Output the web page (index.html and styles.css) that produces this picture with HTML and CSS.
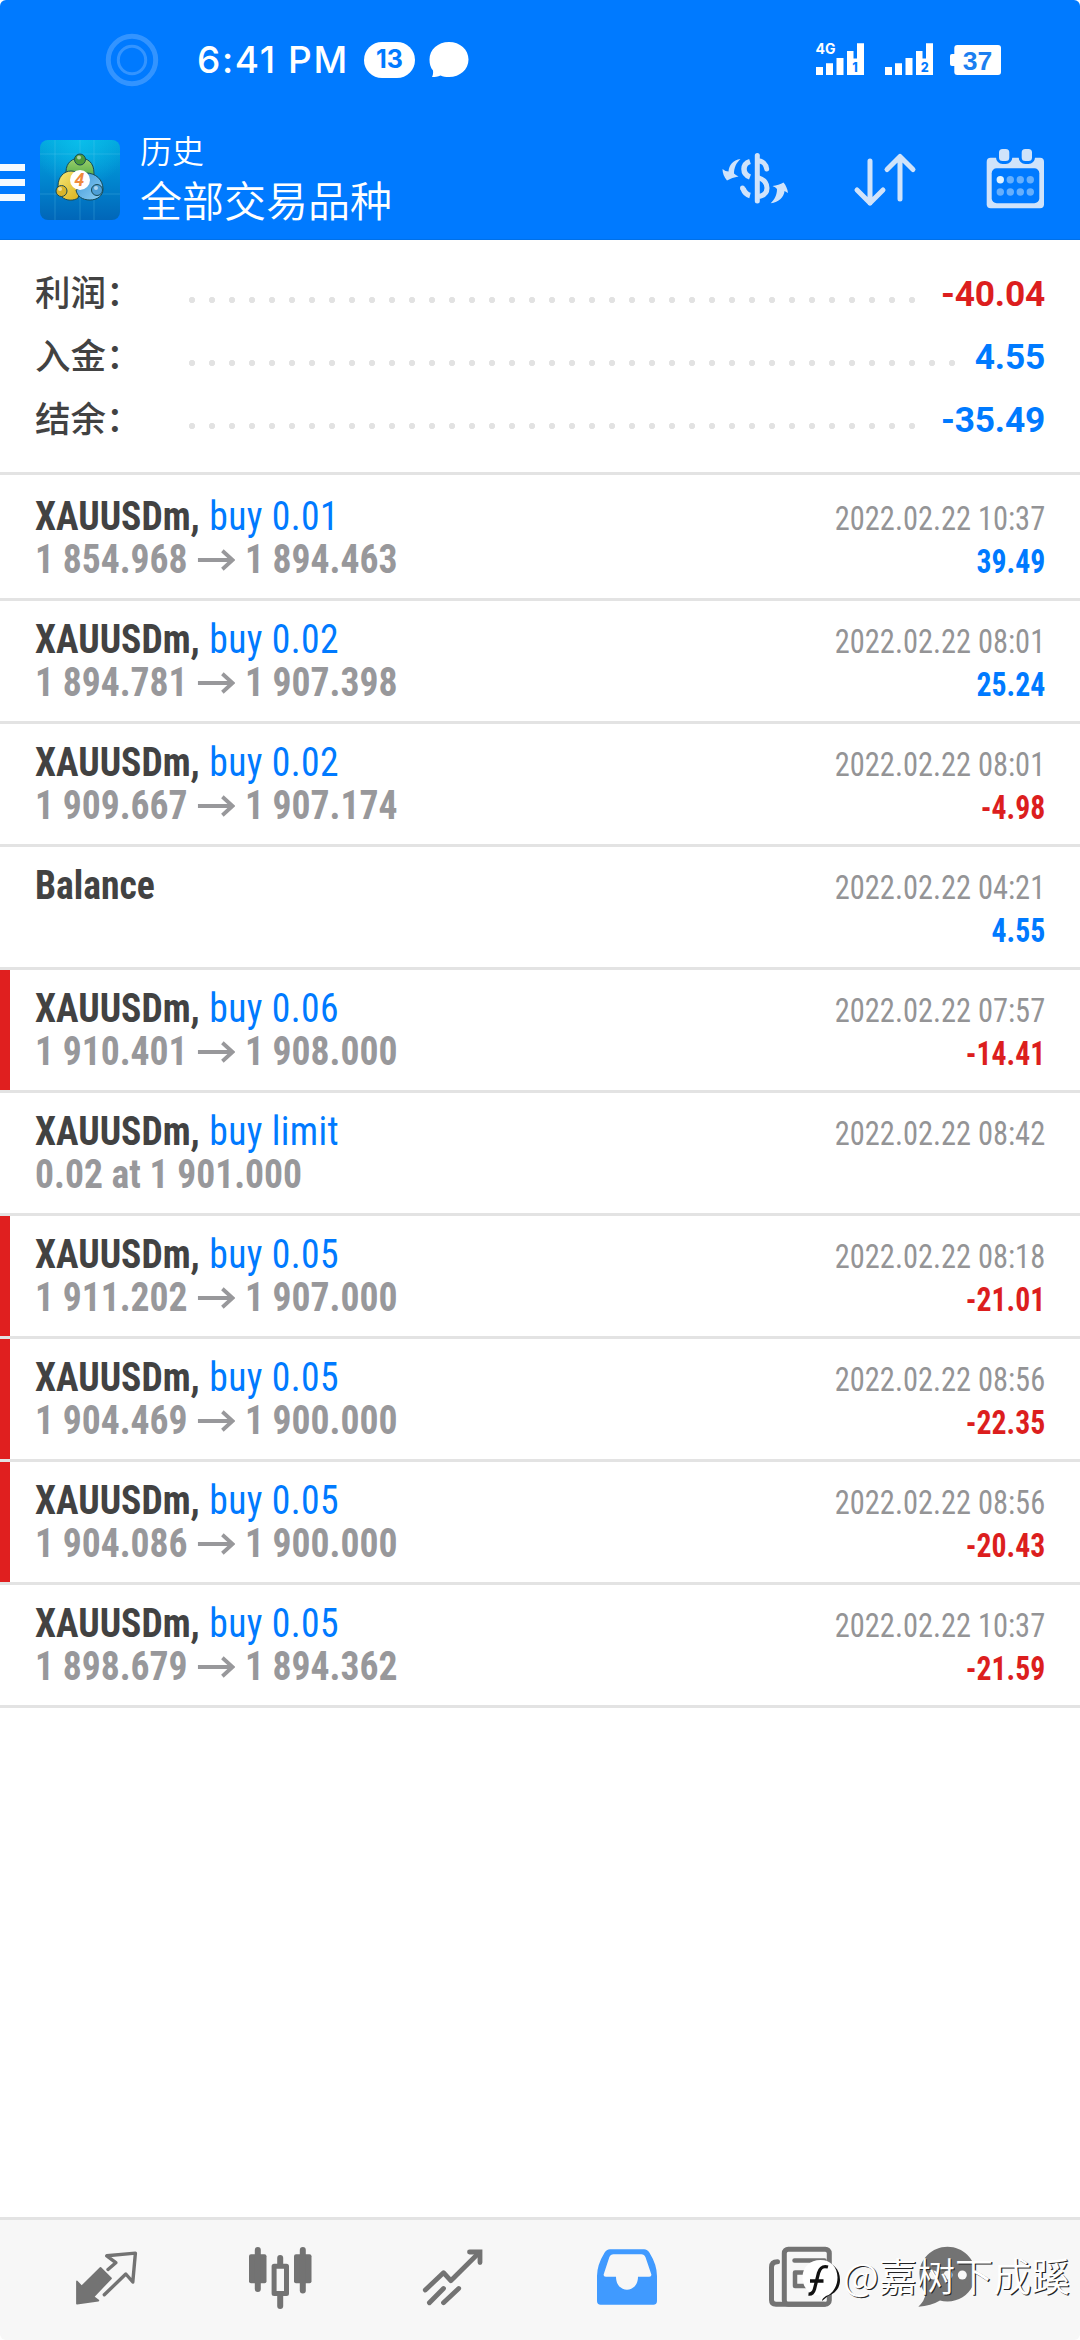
FILE: index.html
```html
<!DOCTYPE html>
<html lang="zh-CN">
<head>
<meta charset="utf-8">
<title>历史</title>
<link rel="stylesheet" href="styles.css">
</head>
<body>
<div class="screen">
  <header class="header">
    <div class="status">
      <svg class="camera" width="54" height="54" viewBox="0 0 54 54" fill="none" stroke="#fff" stroke-opacity=".2"><circle cx="27" cy="27" r="23.7" stroke-width="5"/><circle cx="27" cy="27" r="13.7" stroke-width="3"/></svg>
      <span class="time">6:41 PM</span>
      <span class="badge">13</span>
      <svg class="msg" width="40" height="36" viewBox="0 0 40 36"><path fill="#fff" d="M20 0C31 0 39.500 7.500 39.500 17.500S31 35 20 35c-3.500 0-6-.5-8.500-1.500C9 34.500 6 35 3 35c1-2 1.300-4 1-6.500C1.500 25.500.5 22 .5 17.500.5 7.500 9 0 20 0z"/></svg>
      <svg class="radio" width="204" height="60" viewBox="0 0 204 60" fill="#fff">
        <text class="net" x="15.500" y="23.500">4G</text>
        <path d="M16 37h7v8h-7zM26 33.300h7V45h-7zM36.500 28h7v17h-7zM47 21h6.500v7.500H57V13.300h7V45H47z"/>
        <path d="M85 37h7v8h-7zM95 33.300h7V45h-7zM105.500 28h7v17h-7zM116 21h6.500v7.500h3.500V13.300h7V45h-17z"/>
        <text class="sim" x="55" y="41.800">1</text><text class="sim" x="124.800" y="41.800">2</text>
        <rect x="154.300" y="15" width="46.700" height="30" rx="3"/><rect x="150" y="24" width="8" height="12" rx="2"/>
        <text class="level" x="177.500" y="39.500">37</text>
      </svg>
    </div>
    <div class="appbar">
      <div class="burger"><i></i><i></i><i></i></div>
      <svg class="logo" width="80" height="80" viewBox="0 0 80 80">
        <defs>
          <linearGradient id="bg" x1="0" y1="0" x2="0" y2="1"><stop offset="0" stop-color="#02a6dc"/><stop offset=".5" stop-color="#0186cf"/><stop offset="1" stop-color="#0166b8"/></linearGradient>
          <radialGradient id="gl" cx=".5" cy="0" r=".6"><stop offset="0" stop-color="#0cc4ee" stop-opacity=".8"/><stop offset="1" stop-color="#0cc4ee" stop-opacity="0"/></radialGradient>
          <linearGradient id="gr" x1="0" y1="0" x2="0" y2="1"><stop offset="0" stop-color="#a0d06a"/><stop offset="1" stop-color="#2c9a3a"/></linearGradient>
          <linearGradient id="ye" x1="0" y1="0" x2="1" y2="1"><stop offset="0" stop-color="#f6e878"/><stop offset="1" stop-color="#d8ae18"/></linearGradient>
          <linearGradient id="bl" x1="0" y1="0" x2="1" y2="1"><stop offset="0" stop-color="#3c96d8"/><stop offset="1" stop-color="#8fd0f4"/></linearGradient>
        </defs>
        <rect width="80" height="80" rx="8" fill="url(#bg)"/><rect width="80" height="80" rx="8" fill="url(#gl)"/>
        <path d="M15 0v80M40 0v80M54 0v80M0 14h80M0 54h80" stroke="#6fd0f2" stroke-opacity=".25"/>
        <g stroke="#174a55" stroke-width="1">
          <path d="M26 32C26 22 33 18 40 18s14 4 14 15c0 6-1 10-5 14L32 45c-4-3-6-8-6-13z" fill="url(#gr)"/>
          <path d="M18 46c0-9 6-15 13-15 6 0 11 5 11 13l-4 14c-4 3-12 3-16-1-3-3-4-7-4-11z" fill="url(#ye)"/>
          <path d="M36 50c7-2 9-9 10-17 10 0 17 7 17 16 0 7-6 11-13 11-8 0-13-4-14-10z" fill="url(#bl)"/>
          <circle cx="40" cy="19.500" r="5.500" fill="#4c9a3a"/><circle cx="21.500" cy="51" r="5.500" fill="#d8b42a"/><circle cx="57" cy="50" r="5.500" fill="#4d9fd6"/>
        </g>
        <g fill="#fff" fill-opacity=".55"><circle cx="39" cy="17.500" r="2"/><circle cx="20" cy="49" r="2"/><circle cx="56" cy="48" r="2"/></g>
        <circle cx="40" cy="40" r="10" fill="#fff"/>
        <text class="four" x="39.500" y="46">4</text>
      </svg>
      <div class="titles"><div class="sub">历史</div><div class="main">全部交易品种</div></div>
      <div class="actions">
        <svg width="90" height="80" viewBox="0 0 90 80" fill="none" stroke="#d0e3fa" stroke-width="5">
          <path d="M47.300 15.500V61" stroke-linecap="round"/>
          <path d="M48 20.800c4.500.2 8 3.200 8.700 8.200" stroke-linecap="round"/><path d="M48 37.500c6 2 9 5.500 9 10.500 0 4.500-3 7.500-8 8.500"/>
          <path d="M40 21.500c-8 2.500-8 12.500 0 15.500M40 55.500c-3-.8-5.500-3-7-7" stroke-width="5.500"/><circle cx="32.500" cy="48" r="2.500" fill="#d0e3fa" stroke="none"/>
          <path d="M30.500 19C23 20 19 25 18.500 31.500c-2 0-4-.8-6-2.500 0 4 1.500 8 4.500 11.500 3.500-2 7-3.200 11.500-4-2-1-3.500-2-4.500-3 0-6 2.500-11 6.500-14.500zM60.700 63.300C69 62 74 57 74.500 51l3.500 2c-.5-4-2-7.500-4.500-10.500-3 2-7 3-11 3.500 2 .8 3.500 1.800 4.500 3 0 6-2.500 10.500-6.300 14.300z" fill="#d0e3fa" stroke="none"/>
        </svg>
        <svg width="90" height="80" viewBox="0 0 90 80" fill="none" stroke="#d0e3fa" stroke-width="5" stroke-linecap="round" stroke-linejoin="round"><path d="M30 21v42M17 50l13 13 13-13M60 59V16.500M47 29.500l13-13 13 13"/></svg>
        <svg width="90" height="80" viewBox="0 0 90 80">
          <rect x="16.700" y="17.700" width="57.300" height="50.600" rx="4" fill="#d0e3fa"/><rect x="21.700" y="28.300" width="47.600" height="35" rx="5" fill="#007aff"/>
          <g fill="#d0e3fa" stroke="#007aff" stroke-width="3"><rect x="27.500" y="7.500" width="13.300" height="15" rx="5"/><rect x="50.200" y="7.500" width="13.300" height="15" rx="5"/></g>
          <g fill="#66affc"><circle cx="40.300" cy="39.700" r="3.700"/><circle cx="50.300" cy="39.700" r="3.700"/><circle cx="60.300" cy="39.700" r="3.700"/><circle cx="30.300" cy="52" r="3.700"/><circle cx="40.300" cy="52" r="3.700"/><circle cx="50.300" cy="52" r="3.700"/><circle cx="60.300" cy="52" r="3.700"/></g><circle cx="30.300" cy="39.700" r="3.700" fill="#e0f2ff"/>
        </svg>
      </div>
    </div>
  </header>

  <section class="summary">
    <div class="sum"><span class="label">利润：</span><span class="dots"></span><span class="total neg">-40.04</span></div>
    <div class="sum"><span class="label">入金：</span><span class="dots"></span><span class="total pos">4.55</span></div>
    <div class="sum"><span class="label">结余：</span><span class="dots"></span><span class="total pos">-35.49</span></div>
  </section>

  <svg class="defs" width="0" height="0"><symbol id="arrow" viewBox="0 0 41 22"><path d="M0 11h38M27 1.500L38 11 27 20.500" fill="none" stroke="#98989b" stroke-width="4.200"/></symbol></svg>

  <main class="deals">
    <div class="deal"><div class="l"><div><b>XAUUSDm,</b> <span class="op">buy 0.01</span></div><div class="price">1 854.968<svg class="arr"><use href="#arrow"/></svg>1 894.463</div></div><div class="r"><div class="date">2022.02.22 10:37</div><div class="pl pos">39.49</div></div></div>
    <div class="deal"><div class="l"><div><b>XAUUSDm,</b> <span class="op">buy 0.02</span></div><div class="price">1 894.781<svg class="arr"><use href="#arrow"/></svg>1 907.398</div></div><div class="r"><div class="date">2022.02.22 08:01</div><div class="pl pos">25.24</div></div></div>
    <div class="deal"><div class="l"><div><b>XAUUSDm,</b> <span class="op">buy 0.02</span></div><div class="price">1 909.667<svg class="arr"><use href="#arrow"/></svg>1 907.174</div></div><div class="r"><div class="date">2022.02.22 08:01</div><div class="pl neg">-4.98</div></div></div>
    <div class="deal"><div class="l"><div><b>Balance</b></div></div><div class="r"><div class="date">2022.02.22 04:21</div><div class="pl pos">4.55</div></div></div>
    <div class="deal stop"><div class="l"><div><b>XAUUSDm,</b> <span class="op">buy 0.06</span></div><div class="price">1 910.401<svg class="arr"><use href="#arrow"/></svg>1 908.000</div></div><div class="r"><div class="date">2022.02.22 07:57</div><div class="pl neg">-14.41</div></div></div>
    <div class="deal"><div class="l"><div><b>XAUUSDm,</b> <span class="op">buy limit</span></div><div class="price">0.02 at 1 901.000</div></div><div class="r"><div class="date">2022.02.22 08:42</div></div></div>
    <div class="deal stop"><div class="l"><div><b>XAUUSDm,</b> <span class="op">buy 0.05</span></div><div class="price">1 911.202<svg class="arr"><use href="#arrow"/></svg>1 907.000</div></div><div class="r"><div class="date">2022.02.22 08:18</div><div class="pl neg">-21.01</div></div></div>
    <div class="deal stop"><div class="l"><div><b>XAUUSDm,</b> <span class="op">buy 0.05</span></div><div class="price">1 904.469<svg class="arr"><use href="#arrow"/></svg>1 900.000</div></div><div class="r"><div class="date">2022.02.22 08:56</div><div class="pl neg">-22.35</div></div></div>
    <div class="deal stop"><div class="l"><div><b>XAUUSDm,</b> <span class="op">buy 0.05</span></div><div class="price">1 904.086<svg class="arr"><use href="#arrow"/></svg>1 900.000</div></div><div class="r"><div class="date">2022.02.22 08:56</div><div class="pl neg">-20.43</div></div></div>
    <div class="deal"><div class="l"><div><b>XAUUSDm,</b> <span class="op">buy 0.05</span></div><div class="price">1 898.679<svg class="arr"><use href="#arrow"/></svg>1 894.362</div></div><div class="r"><div class="date">2022.02.22 10:37</div><div class="pl neg">-21.59</div></div></div>
  </main>

  <nav class="tabs">
    <svg width="80" height="120" viewBox="0 0 80 120" fill="#737373" stroke="#737373" stroke-linejoin="round" stroke-linecap="round">
      <path d="M11 61.500l4.800 5L34.500 48 45 58.300 27.300 76.800l5 3.700L11 83.700z" stroke-width="1.800"/><path d="M42 49.500l7.800-6.800-9-6.900 28.600-2.700-2.600 28.900-7-8-21.500 20.800" fill="none" stroke-width="3.400"/></svg>
    <svg width="80" height="120" viewBox="0 0 80 120" fill="#737373"><rect x="9" y="34.300" width="17.500" height="29" rx="2"/><rect x="14.800" y="27" width="6" height="45" rx="3"/><rect x="54" y="34.300" width="17.500" height="29" rx="2"/><rect x="59.800" y="27" width="6" height="46.500" rx="3"/><rect x="37.200" y="35" width="6" height="12" rx="3"/><rect x="37.200" y="72" width="6" height="17" rx="3"/><rect x="34.100" y="46.200" width="12.400" height="27.300" fill="none" stroke="#737373" stroke-width="5" stroke-linejoin="round"/></svg>
    <svg width="80" height="120" viewBox="0 0 80 120" fill="none" stroke="#737373" stroke-width="4.800" stroke-linecap="round" stroke-linejoin="round"><path d="M12.300 70l18.200-17.300 7.300 8L66 32.800M16.400 82.700L30.500 68.500M30.500 82.700l15.200-14.200"/><path d="M56.500 32H67v10.500" stroke-linejoin="miter"/></svg>
    <svg width="80" height="120" viewBox="0 0 80 120"><path fill="#409aff" fill-rule="evenodd" d="M23 29.300h34q3.500 0 5.500 3.500Q70 45 70 56v25q0 3.700-3.700 3.700H13.700Q10 84.700 10 81V56q0-11 7.500-23.200 2-3.500 5.500-3.500zM26.500 34.300q-3 0-4.200 3L16.800 54q-.8 2.700 2 2.700H29C29 74 51 74 51 56.700h11.200q2.800 0 2-2.700L58.500 37.300q-1.200-3-4.200-3z"/></svg>
    <svg width="80" height="120" viewBox="0 0 80 120" fill="none" stroke="#737373" stroke-width="5"><path d="M17.500 41.800q-6 0-6 5.500V80q0 4.200 4.500 4.200h48" stroke-linecap="round"/><rect x="24.300" y="29.200" width="45" height="55" rx="4"/><path d="M34.500 40.500h30M35 52.500h11v13.500H35zM54 52h10M54 66h10" stroke-width="4.500" stroke-linecap="round" stroke-linejoin="round"/></svg>
    <svg width="80" height="120" viewBox="0 0 80 120"><path fill="#737373" d="M40.500 26.800C56 26.800 68.500 39 68.500 54S56 81.500 40.500 81.500q-4.500 0-7.500-1-9 5.500-21.700 6.200 6.500-6 7.200-12.700Q12.500 66 12.500 54C12.500 39 25 26.800 40.500 26.800z"/><g fill="#f7f7f7"><circle cx="26.500" cy="55" r="4.500"/><circle cx="41" cy="55" r="4.500"/><circle cx="55.300" cy="55" r="4.500"/></g></svg>
  </nav>

  <div class="watermark">
    <svg width="42" height="46" viewBox="0 0 42 46"><path d="M21 4C32 4 39 11 39 22c0 9-6 14-12 16l-6 5 1-4z" fill="#111"/><path d="M19.500 2C30 2 36.500 9.500 36.500 19.500S30 37 25 38l-5 4-.5-4.500C9 37.500 1.500 30 1.500 19.500S9 2 19.500 2z" fill="#fff"/><path d="M27 9c-6-1.500-8 1-9.500 6L13.500 31q-1.500 5.500-6 5M9 23h13.500" fill="none" stroke="#111" stroke-width="3.300"/></svg>
    <span>@嘉树下成蹊</span>
  </div>
</div>
</body>
</html>
```
FILE: styles.css
```css
* { box-sizing: border-box; }
body { margin: 0; background: #fff; }
svg { display: block; flex: none; }
.screen {
  position: relative;
  display: flex;
  flex-direction: column;
  width: 1080px;
  height: 2340px;
  overflow: hidden;
  border-radius: 6px;
  background: #fff;
  font-family: Roboto, "Noto Sans CJK SC", sans-serif;
}
.defs { position: absolute; }

/* Header */
.header { height: 240px; background: #007aff; border-bottom: 1px solid #0070e8; color: #fff; }
.status { display: flex; align-items: center; height: 120px; padding: 0 76px 0 105px; }
.time { width: 148px; margin-left: 38px; font: 500 37px/44px Inter, sans-serif; letter-spacing: 1.600px; white-space: nowrap; }
.badge { width: 51px; height: 36px; margin-left: 19px; border-radius: 18px; background: #fff; color: #007aff; font: 700 25px/35px Inter, sans-serif; text-align: center; }
.msg { margin-left: 14px; }
.radio { margin-left: auto; }
.net { font: 700 14px Inter, sans-serif; }
.sim { font: 800 12.500px Inter, sans-serif; fill: #007aff; text-anchor: middle; }
.level { font: 700 26.500px "Liberation Sans", sans-serif; fill: #1c7ff0; text-anchor: middle; }

.appbar { display: flex; align-items: center; height: 120px; }
.burger { display: flex; flex-direction: column; gap: 8px; width: 25px; margin-top: 4px; }
.burger i { height: 7px; background: #f4faff; }
.logo { margin-left: 15px; }
.four { font: italic 700 17px "Open Sans", sans-serif; fill: #f08a3c; text-anchor: middle; }
.titles { margin: -7px 0 0 20px; font-family: "Noto Sans CJK SC", sans-serif; font-weight: 350; }
.sub { font-size: 32px; line-height: 44px; }
.main { font-size: 42px; line-height: 56px; }
.actions { display: flex; gap: 40px; margin-left: auto; padding-right: 20px; }

/* Totals */
.summary { height: 235px; padding: 21px 35px 0; border-bottom: 3px solid #e3e3e3; }
.sum { display: flex; align-items: center; height: 63px; }
.label { width: 147px; margin-top: -4px; color: #424242; font: 500 35.500px/63px "Noto Sans CJK SC", sans-serif; }
.dots { flex: 1; height: 8px; margin: 14px 15px 0 0; background: radial-gradient(circle at 10px 4px, #e2e2e2 2.800px, transparent 3.500px) 0 0 / 20px 8px repeat-x; }
.total { font-size: 35.300px; font-weight: 700; line-height: 63px; padding-top: 4px; letter-spacing: -.2px; }
.pos { color: #007aff; }
.neg { color: #dc1e1e; }

/* Deals */
.deals { flex: 1; }
.deal { display: flex; justify-content: space-between; height: 123px; padding: 17px 35px 0; border-bottom: 3px solid #e3e3e3; font-family: "Roboto Condensed", sans-serif; font-size: 40px; line-height: 43px; white-space: nowrap; }
.deal:first-child { height: 126px; padding-top: 20px; }
.stop { padding-left: 25px; background: linear-gradient(#e01f1f, #e01f1f) 0 0 / 10px 100% no-repeat; }
.stop .l { margin-left: 10px; }
.l { color: #424242; transform: scaleX(.94); transform-origin: left; }
.l b { font-weight: 700; }
.op { margin-left: 1px; color: #007aff; letter-spacing: .4px; }
.price { display: flex; align-items: center; height: 43px; color: #98989b; font-weight: 700; }
.arr { width: 40px; height: 22px; margin: 0 10.500px; }
.r { text-align: right; font-size: 33px; padding-top: 2px; }
.date { color: #949496; transform: scaleX(.922); transform-origin: right; }
.pl { font-weight: 700; transform: scaleX(.9); transform-origin: right; }

/* Tabs */
.tabs { display: flex; gap: 93.600px; height: 123px; padding-left: 66px; border-top: 3px solid #e3e3e3; background: #f7f7f7; }
.tabs svg:last-child { margin-left: -27px; }

.watermark { position: absolute; left: 801px; top: 2258px; display: flex; align-items: flex-start; gap: 0; color: #fff; font: 350 38.200px/44px "Noto Sans CJK SC", sans-serif; text-shadow: 1.200px 1.200px 0 #222; white-space: nowrap; }
.watermark span { margin-top: -5px; }
```
